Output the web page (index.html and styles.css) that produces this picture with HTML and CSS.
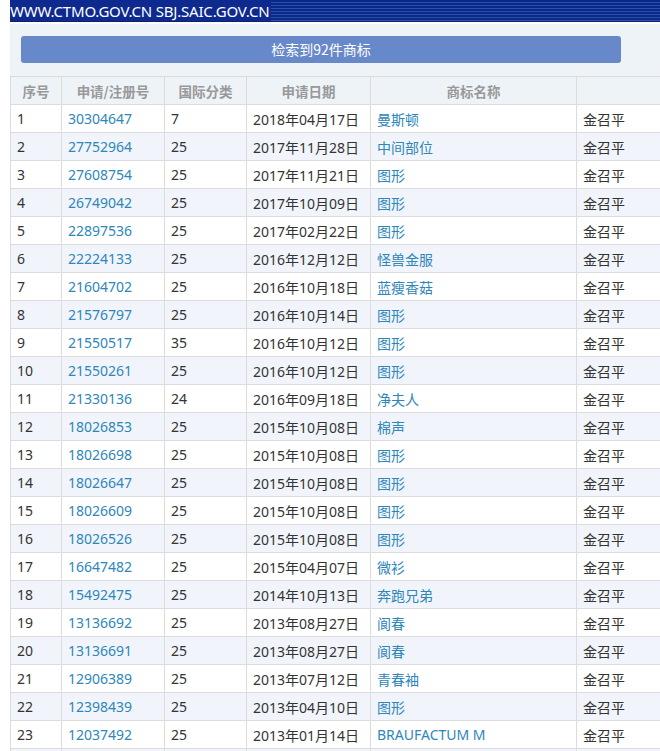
FILE: index.html
```html
<!DOCTYPE html>
<html lang="zh-CN">
<head>
<meta charset="utf-8">
<link rel="stylesheet" href="styles.css">
</head>
<body>
<div class="page">
  <div class="banner"><span class="banner-text">WWW.CTMO.GOV.CN SBJ.SAIC.GOV.CN</span></div>
  <div class="panel">
    <div class="btn">检索到92件商标</div>
  </div>
  <table class="grid">
    <colgroup>
      <col class="c1"><col class="c2"><col class="c3"><col class="c4"><col class="c5"><col class="c6">
    </colgroup>
    <thead>
      <tr><th>序号</th><th>申请/注册号</th><th>国际分类</th><th>申请日期</th><th>商标名称</th><th></th></tr>
    </thead>
    <tbody>
      <tr><td>1</td><td class="lnk">30304647</td><td>7</td><td>2018年04月17日</td><td class="lnk">曼斯顿</td><td>金召平</td></tr>
      <tr><td>2</td><td class="lnk">27752964</td><td>25</td><td>2017年11月28日</td><td class="lnk">中间部位</td><td>金召平</td></tr>
      <tr><td>3</td><td class="lnk">27608754</td><td>25</td><td>2017年11月21日</td><td class="lnk">图形</td><td>金召平</td></tr>
      <tr><td>4</td><td class="lnk">26749042</td><td>25</td><td>2017年10月09日</td><td class="lnk">图形</td><td>金召平</td></tr>
      <tr><td>5</td><td class="lnk">22897536</td><td>25</td><td>2017年02月22日</td><td class="lnk">图形</td><td>金召平</td></tr>
      <tr><td>6</td><td class="lnk">22224133</td><td>25</td><td>2016年12月12日</td><td class="lnk">怪兽金服</td><td>金召平</td></tr>
      <tr><td>7</td><td class="lnk">21604702</td><td>25</td><td>2016年10月18日</td><td class="lnk">蓝瘦香菇</td><td>金召平</td></tr>
      <tr><td>8</td><td class="lnk">21576797</td><td>25</td><td>2016年10月14日</td><td class="lnk">图形</td><td>金召平</td></tr>
      <tr><td>9</td><td class="lnk">21550517</td><td>35</td><td>2016年10月12日</td><td class="lnk">图形</td><td>金召平</td></tr>
      <tr><td>10</td><td class="lnk">21550261</td><td>25</td><td>2016年10月12日</td><td class="lnk">图形</td><td>金召平</td></tr>
      <tr><td>11</td><td class="lnk">21330136</td><td>24</td><td>2016年09月18日</td><td class="lnk">净夫人</td><td>金召平</td></tr>
      <tr><td>12</td><td class="lnk">18026853</td><td>25</td><td>2015年10月08日</td><td class="lnk">棉声</td><td>金召平</td></tr>
      <tr><td>13</td><td class="lnk">18026698</td><td>25</td><td>2015年10月08日</td><td class="lnk">图形</td><td>金召平</td></tr>
      <tr><td>14</td><td class="lnk">18026647</td><td>25</td><td>2015年10月08日</td><td class="lnk">图形</td><td>金召平</td></tr>
      <tr><td>15</td><td class="lnk">18026609</td><td>25</td><td>2015年10月08日</td><td class="lnk">图形</td><td>金召平</td></tr>
      <tr><td>16</td><td class="lnk">18026526</td><td>25</td><td>2015年10月08日</td><td class="lnk">图形</td><td>金召平</td></tr>
      <tr><td>17</td><td class="lnk">16647482</td><td>25</td><td>2015年04月07日</td><td class="lnk">微衫</td><td>金召平</td></tr>
      <tr><td>18</td><td class="lnk">15492475</td><td>25</td><td>2014年10月13日</td><td class="lnk">奔跑兄弟</td><td>金召平</td></tr>
      <tr><td>19</td><td class="lnk">13136692</td><td>25</td><td>2013年08月27日</td><td class="lnk">阆春</td><td>金召平</td></tr>
      <tr><td>20</td><td class="lnk">13136691</td><td>25</td><td>2013年08月27日</td><td class="lnk">阆春</td><td>金召平</td></tr>
      <tr><td>21</td><td class="lnk">12906389</td><td>25</td><td>2013年07月12日</td><td class="lnk">青春袖</td><td>金召平</td></tr>
      <tr><td>22</td><td class="lnk">12398439</td><td>25</td><td>2013年04月10日</td><td class="lnk">图形</td><td>金召平</td></tr>
      <tr><td>23</td><td class="lnk">12037492</td><td>25</td><td>2013年01月14日</td><td class="lnk">BRAUFACTUM M</td><td>金召平</td></tr>
      <tr><td></td><td></td><td></td><td></td><td></td><td></td></tr>
    </tbody>
  </table>
</div>
</body>
</html>
```
FILE: styles.css
```css
html, body {
  margin: 0;
  padding: 0;
  overflow: hidden;
  background: #ffffff;
}
body {
  font-family: "Noto Sans", "Noto Sans CJK SC", sans-serif;
  font-size: 14px;
  color: #333;
}
.page {
  width: 680px;
  padding-left: 10px;
}
.banner {
  height: 22px;
  background: repeating-linear-gradient(to bottom, #0c2886 0 2px, #2a4fae 2px 3px);
  box-sizing: border-box;
  border-bottom: 1px solid #0a2270;
  overflow: hidden;
}
.banner-text {
  display: inline-block;
  height: 21px;
  line-height: 23px;
  padding-right: 2px;
  background: #0e2a8e;
  color: #fff;
  font-size: 15px;
  letter-spacing: -0.2px;
}
.panel {
  margin-top: 2px;
  height: 52px;
  background: #eef3f8;
  padding: 12px 0 0 11px;
  box-sizing: border-box;
}
.btn {
  width: 600px;
  height: 27px;
  line-height: 27px;
  border-radius: 3px;
  background: #6889c9;
  color: #fff;
  text-align: center;
  font-size: 14px;
  font-family: "Noto Sans CJK SC", sans-serif;
}
.grid {
  border-collapse: collapse;
  table-layout: fixed;
  width: 680px;
}
.c1 { width: 51px; }
.c2 { width: 103px; }
.c3 { width: 82px; }
.c4 { width: 124px; }
.c5 { width: 206px; }
.c6 { width: 114px; }
.grid th, .grid td {
  border: 1px solid #dcdcdc;
  height: 28px;
  padding: 0 6px;
  white-space: nowrap;
  overflow: hidden;
  box-sizing: border-box;
}
.grid th {
  background: #eef3f8;
  color: #999;
  font-weight: bold;
  font-size: 13.5px;
  text-align: center;
  font-family: "Noto Sans CJK SC", sans-serif;
}
.grid td {
  text-align: left;
  color: #333;
}
.grid tbody tr:nth-child(even) td {
  background: #f1f5fb;
}
.grid td.lnk {
  color: #2e86b9;
}
```
